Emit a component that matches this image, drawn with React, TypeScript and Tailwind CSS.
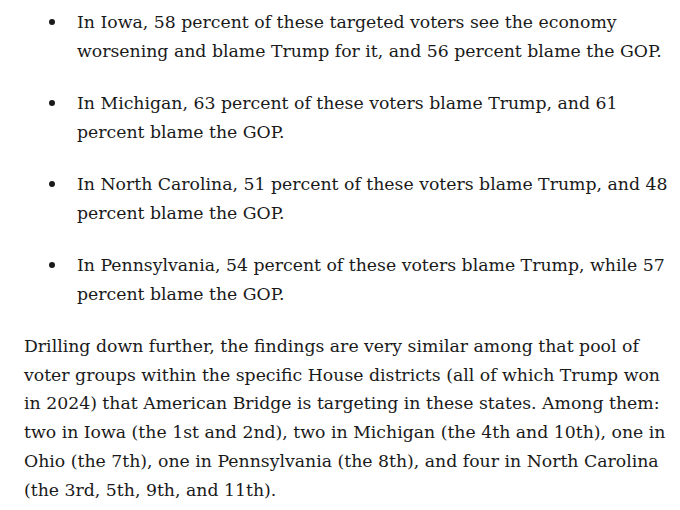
const bullets: string[][] = [
  [
    "In Iowa, 58 percent of these targeted voters see the economy",
    "worsening and blame Trump for it, and 56 percent blame the GOP.",
  ],
  ["In Michigan, 63 percent of these voters blame Trump, and 61", "percent blame the GOP."],
  ["In North Carolina, 51 percent of these voters blame Trump, and 48", "percent blame the GOP."],
  ["In Pennsylvania, 54 percent of these voters blame Trump, while 57", "percent blame the GOP."],
];

const paragraph = [
  "Drilling down further, the findings are very similar among that pool of",
  "voter groups within the specific House districts (all of which Trump won",
  "in 2024) that American Bridge is targeting in these states. Among them:",
  "two in Iowa (the 1st and 2nd), two in Michigan (the 4th and 10th), one in",
  "Ohio (the 7th), one in Pennsylvania (the 8th), and four in North Carolina",
  "(the 3rd, 5th, 9th, and 11th).",
];

export default function App() {
  return (
    <div className="min-h-screen bg-white pl-[24px] pt-[8px] font-['DejaVu_Serif',serif] text-[17.3px] leading-[28.8px] text-[#1a1a1a]">
      <ul className="flex flex-col gap-[23.4px]">
        {bullets.map((lines, i) => (
          <li key={i} className="flex">
            <div className="flex h-[28.8px] w-[53px] shrink-0 items-center pl-[25px]">
              <span className="block h-[6px] w-[6px] rounded-full bg-[#1a1a1a]" />
            </div>
            <p>
              {lines.map((l, j) => (
                <span key={j} className="block whitespace-nowrap">
                  {l}
                </span>
              ))}
            </p>
          </li>
        ))}
      </ul>
      <p className="mt-[23.2px]">
        {paragraph.map((l, j) => (
          <span key={j} className="block whitespace-nowrap">
            {l}
          </span>
        ))}
      </p>
    </div>
  );
}
